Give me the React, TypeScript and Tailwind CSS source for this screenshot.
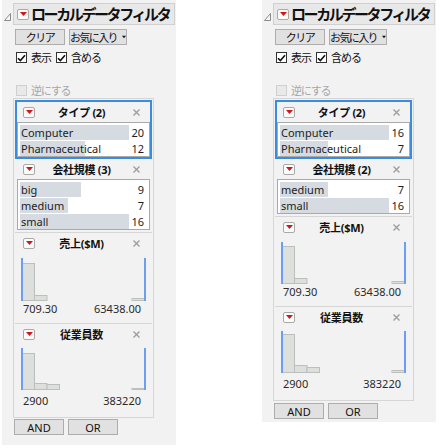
import React from "react";

type Item = { label: string; count: number };

function RedBtn() {
  return (
    <span className="flex h-[11px] w-[12px] shrink-0 items-center justify-center rounded-[2px] border border-[#a9a9a9] bg-[#fbfbfb]">
      <svg width="7" height="4" viewBox="0 0 7 4">
        <path d="M0 0H7L3.5 4Z" fill="#d21616" />
      </svg>
    </span>
  );
}

function CloseX() {
  return (
    <svg width="7" height="7" viewBox="0 0 7 7">
      <path d="M0.5 0.5L6.5 6.5M6.5 0.5L0.5 6.5" stroke="#9c9c9c" strokeWidth="1.3" />
    </svg>
  );
}

function Check({ checked, disabled }: { checked?: boolean; disabled?: boolean }) {
  return (
    <span
      className={
        disabled
          ? "flex h-[11px] w-[11px] shrink-0 items-center justify-center border border-[#cfcfcf] bg-[#e9e9e9]"
          : "flex h-[11px] w-[11px] shrink-0 items-center justify-center border border-[#333333] bg-white"
      }
    >
      {checked && (
        <svg width="9" height="8" viewBox="0 0 9 8">
          <path d="M1 4.2L3.4 6.6L8 1.2" stroke="#111" strokeWidth="1.6" fill="none" />
        </svg>
      )}
    </span>
  );
}

function Header({ title, pl, pr }: { title: string; pl: string; pr: string }) {
  return (
    <div className={`grid h-[20px] grid-cols-[1fr_auto_1fr] items-center ${pl} ${pr}`}>
      <div className="flex">
        <RedBtn />
      </div>
      <div className="whitespace-nowrap text-[11px] font-bold leading-none tracking-[-0.3px] text-[#111]">{title}</div>
      <div className="flex justify-end">
        <CloseX />
      </div>
    </div>
  );
}

function ListBox({ items, mx }: { items: Item[]; mx: string }) {
  const max = Math.max(...items.map((i) => i.count));
  return (
    <div className={`border border-[#a9a9a9] bg-white pt-[1px] ${mx}`}>
      {items.map((it) => (
        <div key={it.label} className="relative flex h-[16px] items-center text-[11px] leading-none text-[#1d1d1d]">
          <div
            className="absolute left-[2px] top-[1px] h-[15px] bg-[#d5dbe1]"
            style={{ width: Math.round((109 * it.count) / max) }}
          />
          <span className="relative pl-[3px]">{it.label}</span>
          <span className="relative ml-auto pr-[5px]">{it.count}</span>
        </div>
      ))}
    </div>
  );
}

function TypeGroup({ items }: { items: Item[] }) {
  return (
    <div className="border-2 border-[#3a8ce0]">
      <Header title="タイプ (2)" pl="pl-[6px]" pr="pr-[10px]" />
      <ListBox items={items} mx="mx-0" />
    </div>
  );
}

function CatGroup({ title, items }: { title: string; items: Item[] }) {
  return (
    <div className="pb-[2px]">
      <Header title={title} pl="pl-[8px]" pr="pr-[12px]" />
      <ListBox items={items} mx="mx-[2px]" />
    </div>
  );
}

function Hist({ h, tops, right }: { h: number; tops: number[]; right: number }) {
  return (
    <svg width="125" height={h} viewBox={`0 0 125 ${h}`} className="block">
      {tops.map((t, i) => (
        <rect
          key={i}
          x={1 + i * 12.5}
          y={t + 0.5}
          width={12.5}
          height={h - t - 1}
          fill="#dcdfdc"
          stroke="#bcc0bc"
          strokeWidth="1"
        />
      ))}
      <rect x={111} y={right + 0.5} width={12} height={h - right - 1} fill="#dcdfdc" stroke="#bcc0bc" strokeWidth="1" />
      <rect x={0} y={0} width={2} height={h} fill="#6c9ef2" />
      <rect x={123} y={0} width={2} height={h} fill="#6c9ef2" />
    </svg>
  );
}

function HistGroup({
  title,
  h,
  tops,
  right,
  lo,
  hi,
  mt,
  lmt,
  pb,
}: {
  title: string;
  h: number;
  tops: number[];
  right: number;
  lo: string;
  hi: string;
  mt: string;
  lmt: string;
  pb: string;
}) {
  return (
    <div className={`border-t border-[#d6d6d6] ${pb}`}>
      <Header title={title} pl="pl-[8px]" pr="pr-[12px]" />
      <div className={`ml-[6px] ${mt}`}>
        <Hist h={h} tops={tops} right={right} />
      </div>
      <div className={`flex h-[14px] items-center justify-between pl-[8px] pr-[11px] text-[11px] leading-none text-[#2a2a2a] ${lmt}`}>
        <span>{lo}</span>
        <span>{hi}</span>
      </div>
    </div>
  );
}

function Btn({ children, w }: { children: React.ReactNode; w: string }) {
  return (
    <div
      className={`flex h-[16px] items-center justify-center whitespace-nowrap border border-[#adadad] bg-[#e1e1e1] text-[11px] leading-none text-[#111] ${w}`}
    >
      {children}
    </div>
  );
}

function Panel({ variant }: { variant: "left" | "right" }) {
  const isLeft = variant === "left";
  const typeItems: Item[] = isLeft
    ? [
        { label: "Computer", count: 20 },
        { label: "Pharmaceutical", count: 12 },
      ]
    : [
        { label: "Computer", count: 16 },
        { label: "Pharmaceutical", count: 7 },
      ];
  const sizeItems: Item[] = isLeft
    ? [
        { label: "big", count: 9 },
        { label: "medium", count: 7 },
        { label: "small", count: 16 },
      ]
    : [
        { label: "medium", count: 7 },
        { label: "small", count: 16 },
      ];
  return (
    <div className={`flex w-[174px] shrink-0 flex-col bg-[#f2f2f2] pt-[3px] ${isLeft ? "ml-[2px] h-[445px]" : "ml-[86px] h-[422px]"}`}>
      {/* title bar */}
      <div className="flex items-center">
        <svg width="7" height="8" viewBox="0 0 7 8" className="ml-[2px] mt-[5px]">
          <path d="M6.5 0.5V7.5H0.5Z" fill="#f6f6f6" stroke="#8a8a8a" strokeWidth="1" />
        </svg>
        <div className="ml-[2px] flex h-[22px] w-[162px] items-center overflow-hidden border border-[#d0d0d0] bg-[#e8e8e8] pl-[3px]">
          <RedBtn />
          <span className="ml-[2px] whitespace-nowrap text-[15px] font-bold leading-none tracking-[-2.4px] text-[#111]">
            ローカルデータフィルタ
          </span>
        </div>
      </div>
      {/* buttons */}
      <div className="mt-[4px] flex gap-[4px] pl-[13px]">
        <Btn w="w-[50px]">
          <span className="tracking-[-1.5px]">クリア</span>
        </Btn>
        <Btn w="w-[58px]">
          <span className="tracking-[-1.6px]">お気に入り</span>
          <svg width="7" height="4" viewBox="0 0 7 4" className="ml-[5px]">
            <path d="M0 0H7L3.5 4Z" fill="#111" />
          </svg>
        </Btn>
      </div>
      {/* checks */}
      <div className="mt-[6px] flex h-[13px] items-center whitespace-nowrap pl-[14px] text-[11px] leading-none text-[#111]">
        <Check checked />
        <span className="ml-[4px] tracking-[-1px]">表示</span>
        <span className="ml-[5px]">
          <Check checked />
        </span>
        <span className="ml-[4px] tracking-[-1px]">含める</span>
      </div>
      <div className="mt-[20px] flex h-[13px] items-center whitespace-nowrap pl-[14px] text-[11px] leading-none text-[#a6a6a6]">
        <Check disabled />
        <span className="ml-[4px] tracking-[-1.2px]">逆にする</span>
      </div>
      {/* filters */}
      <div className="ml-[11px] mt-[1px] w-[141px] border border-[#d6d6d6] p-[1px]">
        <TypeGroup items={typeItems} />
        <CatGroup title={isLeft ? "会社規模 (3)" : "会社規模 (2)"} items={sizeItems} />
        {isLeft ? (
          <HistGroup title="売上($M)" h={43} tops={[5, 37]} right={40} lo="709.30" hi="63438.00" mt="mt-[5px]" lmt="mt-0" pb="pb-[8px]" />
        ) : (
          <HistGroup title="売上($M)" h={42} tops={[4, 36]} right={39} lo="709.30" hi="63438.00" mt="mt-[5px]" lmt="mt-0" pb="pb-[8px]" />
        )}
        {isLeft ? (
          <HistGroup title="従業員数" h={42} tops={[5, 35, 36]} right={40} lo="2900" hi="383220" mt="mt-[4px]" lmt="mt-[3px]" pb="pb-[9px]" />
        ) : (
          <HistGroup title="従業員数" h={42} tops={[3, 34, 36]} right={39} lo="2900" hi="383220" mt="mt-[4px]" lmt="mt-[3px]" pb="pb-[9px]" />
        )}
      </div>
      <div className={`flex gap-[4px] pl-[12px] ${isLeft ? "mt-[1px]" : "mt-[2px]"}`}>
        <Btn w="w-[50px]">AND</Btn>
        <Btn w="w-[50px]">OR</Btn>
      </div>
    </div>
  );
}

export default function App() {
  return (
    <div className="flex h-[448px] w-[440px] items-start bg-white font-['Noto_Sans','Noto_Sans_CJK_JP',sans-serif]">
      <Panel variant="left" />
      <Panel variant="right" />
    </div>
  );
}
